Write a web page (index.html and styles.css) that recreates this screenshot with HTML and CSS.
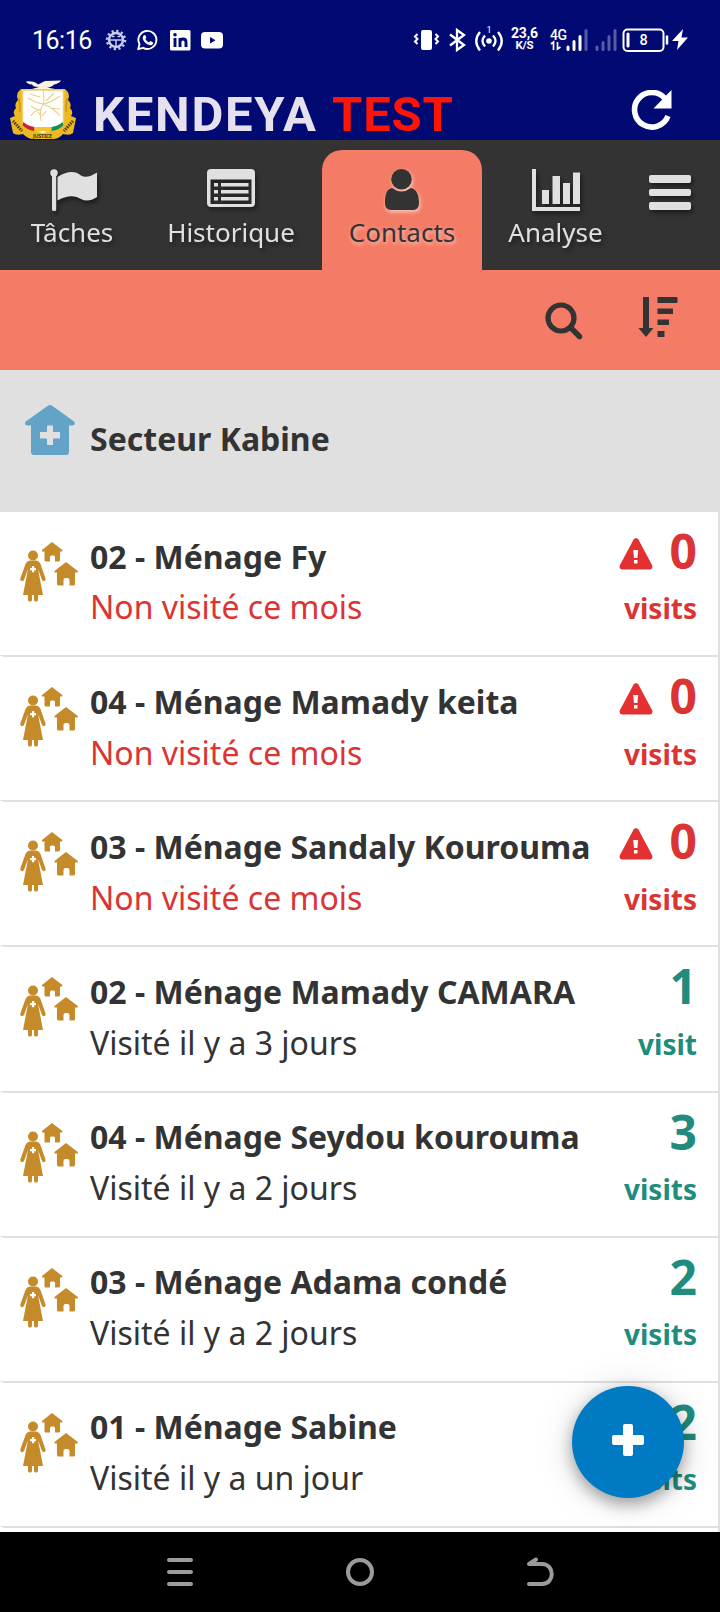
FILE: index.html
```
<!DOCTYPE html>
<html lang="fr">
<head>
<meta charset="utf-8">
<title>Kendeya</title>
<link rel="stylesheet" href="styles.css">
</head>
<body>
<svg class="defs" width="0" height="0">
  <symbol id="household" viewBox="0 0 60 62">
    <g fill="#c58b2a">
      <circle cx="13" cy="13.500" r="5"/>
      <path d="M9.500 18.500h7q3 .5 4 3.500l5 14.500q.5 2-1 2.500t-2.500-1L18 27l5 26H3L8 27 4 38q-1 1.500-2.500 1T.300 36.500L5.500 22q1-3 4-3.500z"/>
      <path d="M8 52h4v6q0 1.500-2 1.500T8 58zM14 52h4v6q0 1.500-2 1.500T14 58z"/>
      <path d="M32 0l10.300 8v1.500H40V18q0 1.500-1.500 1.500H35V15q0-1.500-1.500-1.500h-2Q30 13.500 30 15v4.500h-4.500Q24.500 19.500 24.500 18V9.500H22V8z"/>
      <path d="M46 20l11.800 9v1.500H55V42q0 1.500-1.500 1.500h-4V38q0-2-2-2h-2q-2 0-2 2v5.500h-5Q37 43.500 37 42V30.500h-2.500V29z"/>
    </g>
    <path fill="#fff" d="M12 24h2.200v2H16v2.200h-1.800v2H12v-2h-2V26h2z"/>
  </symbol>
  <symbol id="warning" viewBox="0 0 34 32">
    <path fill="#e33030" d="M14.600 1.500q2.400-3 4.800 0L33 27q1.500 4-2 4.500H3Q-.500 31 1 27z"/>
    <path fill="#fff" d="M14.200 12h5l-.8 8h-3.400zM15 22h3.500v3.500H15z"/>
  </symbol>
</svg>
<div class="screen">
  <header class="top">
    <div class="status">
      <span class="clock">16:16</span>
      <svg class="notifs" width="120" height="24" viewBox="0 0 120 24" fill="none" stroke="#fff">
        <circle cx="11" cy="12" r="9" stroke="#c9cdec" stroke-width="2.500" stroke-dasharray="2.200 2.510"/>
        <circle cx="11" cy="12" r="7" stroke="#c9cdec" stroke-width="2.400"/>
        <path d="M4 12h14M11 12v7M7 8.500h2.500M12.500 8.500H15" stroke="#c9cdec" stroke-width="1.500"/>
        <path d="M33.200 21.200l1.300-5a9 9 0 1 1 3.600 3.600z" stroke-width="1.900" stroke-linejoin="round"/>
        <path d="M39 7.300q-1.500 1-1.300 3 .8 4 5 6.300 3.800 1.700 5.200-.6l.3-1.600-2.800-1.500-1.500 1.500q-2.200-.8-3.600-3.300l1-1.300L40.500 7.200z" fill="#fff" stroke="none"/>
        <rect x="65" y="2" width="20.500" height="20.500" rx="1.500" fill="#fff" stroke="none"/>
        <path d="M70 10v9M75 19v-9M75 14q0-3 3-3t3 3v5" stroke="#000a72" stroke-width="2.900"/>
        <circle cx="70" cy="6.800" r="1.800" fill="#000a72" stroke="none"/>
        <rect x="96" y="4" width="22" height="16.500" rx="4" fill="#fff" stroke="none"/>
        <path d="M105 9l5.500 3.200-5.500 3.300z" fill="#000a72" stroke="none"/>
      </svg>
      <svg class="system" width="276" height="30" viewBox="0 0 276 30" fill="none" stroke="#fff" stroke-width="2">
        <rect x="8" y="5" width="11" height="20" rx="2" fill="#fff" stroke="none"/>
        <path d="M4.500 9L2 11.500l2.500 2.500L2 16.500 4.500 19M22.500 9l2.500 2.500-2.500 2.500 2.500 2.500-2.500 2.500"/>
        <path d="M37 9.500l14 10.500-7 5V5l7 5-14 10.500" stroke-width="2.300"/>
        <circle cx="76" cy="16" r="2.800" fill="#fff" stroke="none"/>
        <path d="M72 10.500q-5 5.500 0 11M80 10.500q5 5.500 0 11M67 7q-7.500 9 0 18.500M85 7q7.500 9 0 18.500" stroke-width="2.300"/>
        <g fill="#fff" stroke="none" class="statustext">
          <text x="73.500" y="8" font-size="9">1</text>
          <text x="98" y="12.500" font-size="14" font-weight="700" textLength="27">23,6</text>
          <text x="102.500" y="24" font-size="11.500" font-weight="700" textLength="18">K/S</text>
          <text x="137" y="14.500" font-size="14" font-weight="500" textLength="17">4G</text>
        </g>
        <path d="M140.500 25v-8l-2.500 2M144.500 17v7l3-2" stroke-width="1.700"/>
        <g stroke-width="3" stroke-linecap="round"><path d="M155 24.500v-2.500M161 24.500v-8M167 24.500v-13"/><path d="M173 24.500v-19M184 24.500v-2.500M190 24.500v-7M196 24.500v-13M202 24.500v-19" stroke="#555ba6"/></g>
        <rect x="210.500" y="4.500" width="40" height="21.500" rx="4"/>
        <path d="M215 9v12" stroke-width="3" stroke-linecap="round"/>
        <path d="M254 10.500v9" stroke-width="2.500"/>
        <text x="226.500" y="20" font-size="14.500" font-weight="500" fill="#fff" stroke="none" class="statustext">8</text>
        <path d="M270 4L259 16h6.500L264 25l11-12.500h-6.500z" fill="#fff" stroke="none"/>
      </svg>
    </div>
    <div class="brand">
      <svg class="emblem" width="66" height="60" viewBox="0 0 66 60">
        <path d="M11 9q-6 5-3 11-4 4-2 8-4 4-1 8L0 38l3 15q3 3 10 1 5 5 10 5h20q6 0 10-5 7 2 10-1l3-15-5-2q3-4-1-8 2-4-2-8 3-6-3-11z" fill="#ecb922"/>
        <path d="M9 18q1 6 1 14M57 18q-1 6-1 14" fill="none" stroke="#c9951b" stroke-width="1.500"/>
        <path d="M3 41l9 10M63 41l-9 10" stroke="#4b3910" stroke-width="3" stroke-dasharray="1.500 1"/>
        <path d="M12.500 10h41v32q0 5-9 7-8 2-11.500 5-3.500-3-11.500-5-9-2-9-7z" fill="#fff" stroke="#f2cd69" stroke-width="1.500"/>
        <path d="M31 41q-2-10 2-17 2-5 0-13M33 24q-7-1-15-6M33 24q7-1 17-8M33 24q11 4 17 12M30 17l-10-3M31 30q-5 0-10-4M31 30q-7 0-10 6M36 21l8-8M41 28l9 1M31 36l-3-4M32 36l4-5" fill="none" stroke="#e7cf87" stroke-width="1.100"/>
        <path d="M13.500 42q4 4 11 5v4q-8-1-12-6z" fill="#c42432"/>
        <path d="M24.500 47h17v4h-17z" fill="#f4c42a"/>
        <path d="M41.500 47q7-1 11-5l1 3q-4 5-12 6z" fill="#168c56"/>
        <text x="23" y="58" font-size="5.500" font-weight="700" textLength="19" fill="#4a3b19">JUSTICE</text>
        <path d="M16 1.500q8-1 12 3l7-3.500 16-.5q-2 3-7 4-2 2.500-7 3l8 1.500H22l7-2q-6 0-7-2.500-5-.5-6-3z" fill="#f8f2df"/>
      </svg>
      <div class="title"><span class="name">KENDEYA</span><span class="env">TEST</span></div>
      <svg class="refresh" width="42" height="42" viewBox="0 0 42 42"><path d="M34 8.500A17.300 17.300 0 1 0 37 26" fill="none" stroke="#fff" stroke-width="5.600"/><path d="M40.500 0v18.500H22.500z" fill="#fff"/></svg>
    </div>
  </header>
  <nav class="tabs">
    <a class="tab tasks"><svg width="48" height="44" viewBox="0 0 48 44" fill="#e0e0e0"><circle cx="4" cy="4" r="3.700"/><path d="M2 4h4.200v37q0 1-2 1t-2.200-1zM7.500 8Q22-1 31 6.500q6 3.500 16-3V28q-9 6-16 2Q22 24 7.500 31.500z"/></svg><span>Tâches</span></a>
    <a class="tab history"><svg width="48" height="44" viewBox="0 0 48 44" fill="#e0e0e0"><path fill-rule="evenodd" d="M4 0h40q4 0 4 4v30q0 4-4 4H4q-4 0-4-4V4Q0 0 4 0zM3.500 10.500V35h41V10.500z"/><path d="M7 14h4v3.500H7zM14 14h27.500v3.500H14zM7 21h4v3.500H7zM14 21h27.500v3.500H14zM7 28h4v3.500H7zM14 28h27.500v3.500H14z"/></svg><span>Historique</span></a>
    <a class="tab active"><svg width="36" height="44" viewBox="0 0 36 44" fill="#333"><circle cx="17.500" cy="10.300" r="10.300"/><path d="M8 19q9.500 7 19 0c6 1 8 8 8 15q0 7-6 7H7q-6 0-6-7c0-7 1-14 7-15z"/></svg><span>Contacts</span></a>
    <a class="tab analytics"><svg width="48" height="44" viewBox="0 0 48 44" fill="#e0e0e0"><path d="M0 0h4v38h44v4H0zM10 21h7v14h-7zM20.500 7h7.500v28h-7.500zM31 14h7v21h-7zM41 3.500h7V35h-7z"/></svg><span>Analyse</span></a>
    <a class="menu"><i></i><i></i><i></i></a>
  </nav>
  <div class="toolbar">
    <svg width="38" height="38" viewBox="0 0 38 38" fill="none" stroke="#333"><circle cx="16" cy="16" r="13" stroke-width="5.200"/><path d="M26 26l8.500 8.500" stroke-width="5.500" stroke-linecap="round"/></svg>
    <svg class="sort" width="40" height="40" viewBox="0 0 40 40" fill="#333"><path d="M5 0h6v31h4.500L8 40 .5 31H5zM19.500 0h19q1 0 1 1v4q0 1-1 1h-19zM19.500 11.500H35V17H19.500zM19.500 22.500H31V28H19.500zM19.500 34H26.500v6h-7z"/></svg>
  </div>
  <section class="place">
    <svg width="50" height="50" viewBox="0 0 50 50"><path fill="#63a3c8" d="M22.500 1q2.500-2 5 0L49 16.500q1.500 1.500 0 3.500l-2 .5h-3V47q0 3-3 3H9q-3 0-3-3V20.500H3L.8 20q-1.500-2 0-3.500z"/><path fill="#e0e0e0" d="M22 20.500h6V27h7v6.500h-7V40h-6v-6.500h-7V27h7z"/></svg>
    <h1>Secteur Kabine</h1>
  </section>
  <main class="list">
    <article class="row late"><svg class="icon"><use href="#household"/></svg><div class="info"><h2>02 - Ménage Fy</h2><p>Non visité ce mois</p></div><div class="visits"><div class="count"><svg><use href="#warning"/></svg>0</div><div class="label">visits</div></div></article>
    <article class="row late"><svg class="icon"><use href="#household"/></svg><div class="info"><h2>04 - Ménage Mamady keita</h2><p>Non visité ce mois</p></div><div class="visits"><div class="count"><svg><use href="#warning"/></svg>0</div><div class="label">visits</div></div></article>
    <article class="row late"><svg class="icon"><use href="#household"/></svg><div class="info"><h2>03 - Ménage Sandaly Kourouma</h2><p>Non visité ce mois</p></div><div class="visits"><div class="count"><svg><use href="#warning"/></svg>0</div><div class="label">visits</div></div></article>
    <article class="row"><svg class="icon"><use href="#household"/></svg><div class="info"><h2>02 - Ménage Mamady CAMARA</h2><p>Visité il y a 3 jours</p></div><div class="visits"><div class="count">1</div><div class="label">visit</div></div></article>
    <article class="row"><svg class="icon"><use href="#household"/></svg><div class="info"><h2>04 - Ménage Seydou kourouma</h2><p>Visité il y a 2 jours</p></div><div class="visits"><div class="count">3</div><div class="label">visits</div></div></article>
    <article class="row"><svg class="icon"><use href="#household"/></svg><div class="info"><h2>03 - Ménage Adama condé</h2><p>Visité il y a 2 jours</p></div><div class="visits"><div class="count">2</div><div class="label">visits</div></div></article>
    <article class="row"><svg class="icon"><use href="#household"/></svg><div class="info"><h2>01 - Ménage Sabine</h2><p>Visité il y a un jour</p></div><div class="visits"><div class="count">2</div><div class="label">visits</div></div></article>
    <button class="fab" aria-label="Ajouter"><svg width="32" height="32" viewBox="0 0 32 32"><path fill="#fff" d="M13 0h6q2 0 2 2v9h9q2 0 2 2v6q0 2-2 2h-9v9q0 2-2 2h-6q-2 0-2-2v-9H2q-2 0-2-2v-6q0-2 2-2h9V2q0-2 2-2z"/></svg></button>
  </main>
  <footer class="keys">
    <svg width="28" height="30" viewBox="0 0 28 30" fill="none" stroke="#9b9b9b" stroke-width="4" stroke-linecap="round"><path d="M3 3h22M3 15h22M3 27h22"/></svg>
    <svg width="28" height="30" viewBox="0 0 28 30" fill="none" stroke="#9b9b9b" stroke-width="4"><circle cx="14" cy="15" r="12"/></svg>
    <svg width="28" height="30" viewBox="0 0 28 30" fill="none" stroke="#9b9b9b" stroke-width="4" stroke-linecap="round" stroke-linejoin="round"><path d="M3 27h13c13 0 13-20 0-20H3l7-4.500"/></svg>
  </footer>
</div>
</body>
</html>
```
FILE: styles.css
```
* { box-sizing: border-box; }
body { margin: 0; font-family: "Noto Sans", sans-serif; color: #333; background: #fff; }
h1, h2, p { margin: 0; }
svg { display: block; flex: none; }
.defs { position: absolute; }
.screen { width: 720px; height: 1612px; display: flex; flex-direction: column; overflow: hidden; }

.top { height: 140px; flex: none; background: #000a72; }
.status { height: 80px; display: flex; align-items: center; padding: 0 31px 0 32px; font-family: Roboto, sans-serif; color: #fff; }
.clock { font-size: 25px; width: 73px; line-height: 30px; white-space: nowrap; letter-spacing: -.5px; padding-top: 2px; }
.system { margin-left: auto; }
.statustext { font-family: Roboto, sans-serif; }
.brand { display: flex; align-items: flex-start; padding-left: 10px; }
.title { margin-left: 17px; margin-top: 6px; font: 700 49px/58px Roboto, sans-serif; white-space: nowrap; display: flex; }
.name { color: #e6e1ee; width: 239px; letter-spacing: 1.700px; }
.env { color: #ff1408; letter-spacing: .8px; }
.refresh { margin-left: auto; margin-right: 47px; margin-top: 10px; }

.tabs { height: 130px; flex: none; display: flex; background: #333; padding-top: 10px; }
.tab { height: 120px; display: flex; flex-direction: column; align-items: center; padding-top: 19px; color: #e0e0e0; font-size: 26px; line-height: 36px; filter: drop-shadow(2px 3px 2px rgba(0,0,0,.45)); }
.tab span { margin-top: 1px; }
.tasks { width: 144px; }
.tasks svg { margin-left: 3px; }
.history { width: 178px; padding-right: 4px; }
.active { width: 160px; background: #f47b65; color: #333; border-radius: 20px 20px 0 0; filter: none; text-shadow: 1px 2px 4px rgba(255,255,255,.6); }
.active svg { filter: drop-shadow(1px 2px 2px rgba(255,255,255,.6)); }
.analytics { width: 148px; padding-right: 1px; }
.menu { display: flex; flex-direction: column; gap: 6px; margin: 25px 0 0 19px; filter: drop-shadow(2px 3px 2px rgba(0,0,0,.45)); }
.menu i { width: 42px; height: 7.600px; border-radius: 2px; background: #e0e0e0; }

.toolbar { height: 100px; flex: none; display: flex; justify-content: flex-end; gap: 55px; padding: 32px 42px 0 0; background: #f47b65; }
.sort { margin-top: -5px; }
.place { height: 142px; flex: none; display: flex; gap: 15px; padding: 35px 25px 0; background: #e0e0e0; }
.place h1 { font-size: 32px; line-height: 44px; margin-top: 12px; }

.list { height: 1020px; flex: none; overflow: hidden; position: relative; border-right: 2px solid #e0e0e0; }
.row { height: 145.150px; display: flex; padding: 30px 21px 0 20px; border-bottom: 2px solid #e0e0e0; border-bottom-left-radius: 8px 2px; }
.icon { width: 60px; height: 62px; margin-right: 10px; }
.info { flex: 1; white-space: nowrap; margin-top: -7.400px; }
h2, .info p { font-size: 32px; line-height: 44px; }
.info p { margin-top: 6.800px; }
.visits { color: #218c7e; font-weight: 700; margin-top: -21px; }
.count { display: flex; justify-content: flex-end; font-size: 48px; line-height: 60px; }
.count svg { width: 34px; height: 32px; margin: 17px 17px 0 0; }
.label { text-align: right; font-size: 28px; line-height: 38px; margin-top: 8.400px; }
.late p, .late .visits { color: #db3434; }
.fab { position: absolute; left: 572px; top: 874px; width: 112px; height: 112px; padding: 0; border: 0; border-radius: 50%; background: #007ac2; display: grid; place-items: center; box-shadow: 0 6px 16px rgba(0,0,0,.35), 0 2px 40px rgba(0,0,0,.13); }
.fab svg { margin-top: -4px; }
.keys { height: 80px; flex: none; display: flex; justify-content: center; gap: 152px; padding-top: 25px; background: #000; }
```
